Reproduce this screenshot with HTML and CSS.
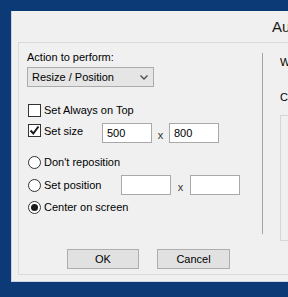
FILE: index.html
```html
<!DOCTYPE html>
<html lang="en">
<head>
	<meta charset="UTF-8">
	<title>AutoSizer</title>
	<link rel="stylesheet" href="styles.css">
</head>
<body>
<div class="window">
	<div class="titlebar">AutoSizer</div>
	<div class="panel">
		<div class="leftCol">
			<div class="caption">Action to perform:</div>
			<div class="select">
				<span>Resize / Position</span>
				<svg width="8" height="5" viewBox="0 0 8 5"><path d="M0.5 0.5 L4 4 L7.5 0.5" fill="none" stroke="#4a4a4a" stroke-width="1.3"/></svg>
			</div>

			<div class="row r1">
				<label class="opt"><span class="check"></span>Set Always on Top</label>
			</div>
			<div class="row r2">
				<label class="opt w75"><span class="check checked"><svg width="11" height="11" viewBox="0 0 11 11"><path d="M1.5 5.5 L4.3 8.5 L9.5 1.5" fill="none" stroke="#1a1a1a" stroke-width="2"/></svg></span>Set size</label>
				<span class="field">500</span><span class="times">x</span><span class="field">800</span>
			</div>
			<div class="row r3">
				<label class="opt"><span class="radio"></span>Don't reposition</label>
			</div>
			<div class="row r4">
				<label class="opt w94"><span class="radio"></span>Set position</label>
				<span class="field"></span><span class="times wide">x</span><span class="field"></span>
			</div>
			<div class="row r5">
				<label class="opt"><span class="radio on"></span>Center on screen</label>
			</div>

			<div class="buttons">
				<span class="btn ok">OK</span>
				<span class="btn cancel">Cancel</span>
			</div>
		</div>
		<div class="separator"></div>
		<div class="rightCol">
			<div class="line">Window title:</div>
			<div class="line second">Class:</div>
			<div class="listBox"></div>
		</div>
	</div>
</div>
</body>
</html>
```

FILE: styles.css
```css
html, body {
	margin:0;
	height:297px;
	overflow:hidden;
}
body {
	background:#0b3a77;
	font-family:"Liberation Sans", Arial, sans-serif;
	font-size:11px;
	color:#000;
}

.window {
	margin:11px 0 0 11px;
	width:420px;
	height:271px;
	box-sizing:border-box;
	background:#f0f0f0;
	border-left:1px solid #c8d4e4;
	border-bottom:1px solid #c8d4e4;
}
.titlebar {
	height:31px;
	box-sizing:border-box;
	padding:6px 0 0 260px;
	font-size:15px;
	line-height:20px;
	color:#1b1b1b;
	white-space:nowrap;
}

.panel {
	margin-left:6px;
	height:233px;
	box-sizing:border-box;
	border:1px solid #dadada;
	display:flex;
}
.leftCol {
	width:243px;
	flex:none;
	padding-left:8px;
	box-sizing:border-box;
}
.separator {
	width:1px;
	flex:none;
	height:181px;
	margin-top:10px;
	background:#a4a4a4;
}
.rightCol {
	padding:12px 0 0 17px;
	white-space:nowrap;
}

.caption {
	margin-top:7px;
	line-height:14px;
}
.select {
	margin-top:3px;
	width:127px;
	height:20px;
	box-sizing:border-box;
	border:1px solid #acacac;
	background:#e5e5e5;
	display:flex;
	align-items:center;
	justify-content:space-between;
	padding:0 5px 0 4px;
}

.row {
	display:flex;
	align-items:center;
	height:20px;
}
.r1 { margin-top:13px; }
.r2 { margin-top:2px; height:22px; }
.r3 { margin-top:8px; }
.r4 { margin-top:3px; }
.r5 { margin-top:2px; }

.opt {
	display:flex;
	align-items:center;
	gap:3px;
	padding-left:1px;
	white-space:nowrap;
}
.w75 { width:75px; flex:none; box-sizing:border-box; }
.w94 { width:94px; flex:none; box-sizing:border-box; }
.r2 .opt { margin-bottom:5px; }

.check {
	width:13px;
	height:13px;
	box-sizing:border-box;
	border:1px solid #333;
	background:#fff;
	display:flex;
	align-items:center;
	justify-content:center;
}
.check svg { display:block; }
.radio {
	width:13px;
	height:13px;
	box-sizing:border-box;
	border:1px solid #333;
	border-radius:50%;
	background:#fff;
	display:flex;
	align-items:center;
	justify-content:center;
}
.radio.on::after {
	content:'';
	width:7px;
	height:7px;
	border-radius:50%;
	background:#1a1a1a;
}

.field {
	width:50px;
	height:20px;
	flex:none;
	box-sizing:border-box;
	border:1px solid #a9a9a9;
	background:#fff;
	padding:0 4px;
	line-height:18px;
}
.times {
	width:17px;
	flex:none;
	text-align:center;
	margin-top:3px;
	color:#333;
}
.times.wide { width:19px; }

.buttons {
	margin-top:32px;
	padding-left:40px;
	display:flex;
	gap:18px;
}
.btn {
	height:20px;
	box-sizing:border-box;
	border:1px solid #adadad;
	background:#e1e1e1;
	text-align:center;
	line-height:18px;
}
.ok { width:72px; }
.cancel { width:73px; }

.line { line-height:14px; }
.second { margin-top:21px; }
.listBox {
	margin-top:11px;
	width:100px;
	height:124px;
	border:1px solid #d6d6d6;
}
```
